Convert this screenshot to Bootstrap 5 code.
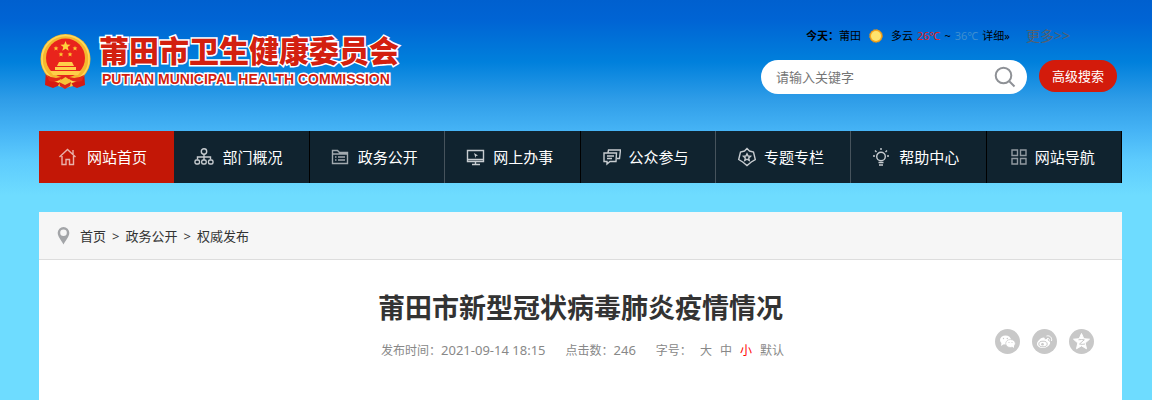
<!DOCTYPE html>
<html lang="zh-CN">
<head>
<meta charset="utf-8">
<meta name="viewport" content="width=device-width, initial-scale=1">
<title>莆田市卫生健康委员会</title>
<link rel="stylesheet" href="https://cdn.jsdelivr.net/npm/bootstrap@5.3.0/dist/css/bootstrap.min.css">
<style>
html { min-height: 100%; background: #6edcff; }
body {
  min-height: 100vh;
  font-family: "Noto Sans", "Noto Sans CJK SC", sans-serif;
  font-size: 13px;
  line-height: 20px;
  color: #333;
  background: #6edcff linear-gradient(#0060cf 0, #0064d4 20px, #0080dc 62px, #2f9de8 100px, #45b3f5 130px, #5dcbfd 160px, #6edcff 195px) no-repeat;
}
a { color: inherit; text-decoration: none; }
.site { padding-left: 39px; padding-right: 30px; }
.masthead { min-height: 131px; }
.brand-link { padding-top: 28px; }
.brand-link svg { margin-top: 4px; }
.brand-zh, .brand-en {
  color: #d3200f;
  -webkit-text-stroke: 3px #fff;
  paint-order: stroke fill;
  white-space: nowrap;
}
.brand-zh { font-family: "Noto Sans CJK SC", sans-serif; font-size: 30px; font-weight: 900; line-height: 43px; }
.brand-en { font-family: "Liberation Sans", sans-serif; font-size: 14px; font-weight: 700; line-height: 16px; padding-left: 3px; }
.tools { padding-top: 26px; padding-right: 5px; }
.weather { font-size: 11px; color: #000; padding-left: 45px; margin-bottom: 14px; }
.low { color: #e02020; }
.high { color: #3f8fd0; }
.more-link { font-size: 14px; color: #56606e; margin-left: 16px; }
.search-form { gap: 12px; }
.search-box { width: 266px; height: 34px; background: #fff; border-radius: 17px; padding: 0 11px 0 15px; }
.search-box input { border: 0; outline: 0; font-size: 13px; background: none; min-width: 0; }
.search-box input::placeholder { color: #757575; }
.advanced { width: 78px; height: 32px; border: 0; border-radius: 16px; background: #d31b0b; color: #fff; font-size: 13px; }
.main-nav { background: #10232f; }
.main-nav a { height: 52px; padding-left: 20px; font-size: 15px; color: #fff; border-right: 1px solid #000; }
.main-nav svg { width: 20px; height: 20px; margin-right: 8px; fill: none; stroke: #c7ccd0; stroke-width: 1.4; }
.main-nav a.active { background: #c31706; border-color: #c31706; }
.main-nav .active svg { stroke: #e9b0aa; }
.main-nav .lined { border-right-color: #46535c; }
.sheet { background: #fff; margin-top: 29px; min-height: 188px; }
.crumbs { height: 48px; background: #f6f6f6; border-bottom: 1px solid #ddd; padding-left: 17px; gap: 6px; }
.crumbs svg { margin-right: 4px; }
.headline { font-size: 27px; line-height: 40px; font-weight: 700; padding-top: 28px; margin: 0; }
.meta { font-size: 12px; color: #888; margin-top: 12px; padding-left: 4px; gap: 20px; }
.meta .figure-text { font-size: 13px; }
.meta button { border: 0; background: none; padding: 0; color: inherit; }
.meta button.current { color: #f00; }
.sizes { gap: 8px; }
.article-head { position: relative; }
.share { position: absolute; right: 28px; top: 69px; gap: 12px; }
.share svg { width: 25px; height: 25px; display: block; }
</style>
</head>
<body>
<div class="site">
  <header class="masthead d-flex justify-content-between align-items-start">
    <a href="#" class="brand-link d-flex align-items-start">
      <svg width="52" height="58" viewBox="0 0 52 58" class="flex-shrink-0" aria-hidden="true">
        <path d="M7 38 6 53l8 3 7-3 5 3 5-3 7 3 8-3-1-15z" fill="#d51a12"/>
        <circle cx="26.500" cy="27" r="25" fill="#f5b82e"/>
        <circle cx="26.500" cy="27" r="23.500" fill="none" stroke="#ffd95a" stroke-width="1.500"/>
        <circle cx="26.500" cy="26" r="19.500" fill="#e9241c"/>
        <path d="m26.500 9 1.400 3.500 3.700.2-2.900 2.400 1 3.600-3.200-2-3.200 2 1-3.600-2.900-2.400 3.700-.2z" fill="#ffd23c"/>
        <path d="m17 14 .7 1.500h1.700l-1.300 1.200.5 1.700-1.600-1-1.600 1 .5-1.700-1.300-1.200h1.700zm19 0 .7 1.500h1.700l-1.300 1.200.5 1.700-1.600-1-1.600 1 .5-1.700-1.300-1.200h1.700zM22 20l.7 1.500h1.700l-1.300 1.200.5 1.700-1.600-1-1.600 1 .5-1.700-1.300-1.200h1.700zm9 0 .7 1.500h1.700l-1.300 1.200.5 1.700-1.600-1-1.600 1 .5-1.700-1.300-1.200h1.700z" fill="#ffc832"/>
        <path d="M20 30h13l2 4H18zm-4 5h21v3H16zm-5 4h31l-3 4H14z" fill="#ffd04a"/>
        <path d="M8 43q9 6 18 0 9 6 19 0l-2 6q-8 2-13-2l-4 6-4-6q-5 4-12 2z" fill="#e02a18"/>
        <path d="m22 48 4.500-3 4.500 3 3 6-7.500 2-7.500-2z" fill="#f7c43a"/>
        <path d="m20 50 6 3 6-3-1 4-5 3-5-3z" fill="#d9281b"/>
      </svg>
      <span class="d-flex flex-column ps-2">
        <span class="brand-zh">莆田市卫生健康委员会</span>
        <span class="brand-en">PUTIAN MUNICIPAL HEALTH COMMISSION</span>
      </span>
    </a>
    <div class="tools">
      <div class="weather d-flex align-items-center">
        <strong>今天：</strong><span>莆田</span>
        <svg class="mx-2" width="14" height="14" viewBox="0 0 14 14" aria-hidden="true"><circle cx="7" cy="7" r="6.500" fill="#f6a51c" stroke="#b98a3c" stroke-dasharray="1.500 1.500"/><circle cx="7" cy="7" r="5" fill="#ffe36d"/></svg>
        <span>多云</span><span class="low ms-1">26℃</span><span class="mx-1">~</span><span class="high">36℃</span>
        <a class="ms-1" href="#">详细»</a><a href="#" class="more-link">更多&gt;&gt;</a>
      </div>
      <form class="search-form d-flex align-items-start">
        <div class="search-box d-flex align-items-center">
          <input class="flex-grow-1 p-0" type="text" placeholder="请输入关键字" aria-label="请输入关键字">
          <button type="button" class="border-0 bg-transparent p-0" aria-label="搜索">
            <svg class="d-block" width="22" height="22" viewBox="0 0 22 22" fill="none" stroke="#8e9196" stroke-width="2"><circle cx="9.500" cy="9.500" r="7.800"/><path d="m15 15 5.500 5.500"/></svg>
          </button>
        </div>
        <button type="button" class="advanced p-0">高级搜索</button>
      </form>
    </div>
  </header>

  <nav class="main-nav row g-0 flex-nowrap">
    <a href="#" class="col active d-flex align-items-center"><svg viewBox="2 0 20 20"><path d="m1.500 10 8-7.500 8 7.500M4 9v8.500h4v-5h3.500v5h4V9M15 3v4" transform="translate(1)"/></svg>网站首页</a>
    <a href="#" class="col d-flex align-items-center"><svg viewBox="0 0 20 20"><circle cx="10" cy="4.500" r="2.700"/><path d="M10 7v6M3.500 12.500V10h13v2.500"/><rect x="1" y="13" width="4.500" height="4" rx="1.500"/><rect x="7.700" y="13" width="4.500" height="4" rx="1.500"/><rect x="14.500" y="13" width="4.500" height="4" rx="1.500"/></svg>部门概况</a>
    <a href="#" class="col lined d-flex align-items-center"><svg viewBox="0 0 20 20" opacity=".8"><path d="M2.500 16.500v-13h5l2 2h8v11zM2.500 7h15M5 10h1.500M5 13h1.500M8 10h7M8 13h7"/></svg>政务公开</a>
    <a href="#" class="col d-flex align-items-center"><svg viewBox="0 0 20 20"><path d="M2.500 3.500h16v11h-16zM2.500 12.500h16M7 17.500h8M10.500 14.500v3"/><path d="m9 6 4 2.500-2 .5-.5 2z" fill="#c7ccd0" stroke="none"/></svg>网上办事</a>
    <a href="#" class="col lined d-flex align-items-center"><svg viewBox="-1 0 20 20"><path d="M2 6h12.500l-.5 8.500H8l-3 2.500v-2.500H2zM6 5.500l.5-2.500h12l-1 8.500H15M5 9h7M5 11.500h5"/></svg>公众参与</a>
    <a href="#" class="col lined d-flex align-items-center"><svg viewBox="-1 0 20 20"><path d="M10 1.500 12.500 4l4 1 1.800 7.500-4 2.500L10 18.500 5.700 15l-4-2.500L3.500 5l4-1z"/><path d="m10 6.800 1.100 2.200 2.400.3-1.800 1.700.5 2.400-2.200-1.200-2.200 1.200.5-2.400-1.800-1.700 2.400-.3z"/></svg>专题专栏</a>
    <a href="#" class="col d-flex align-items-center"><svg viewBox="0 0 20 20"><circle cx="10" cy="9.500" r="4.300"/><path d="M7.500 15.500h5M8 18h4M10 1v2M4 3.500 5.500 5M16 3.500 14.500 5M2 9h2M16 9h2"/></svg>帮助中心</a>
    <a href="#" class="col d-flex align-items-center"><svg viewBox="-1 0 20 20" opacity=".7"><path d="M4 3h5.500v5.500H4zM12.500 3H18v5.500h-5.500zM4 11.500h5.500V17H4zM12.500 11.500H18V17h-5.500z"/></svg>网站导航</a>
  </nav>

  <main class="sheet">
    <nav class="crumbs d-flex align-items-center" aria-label="位置">
      <svg width="14" height="18" viewBox="0 0 14 18" aria-hidden="true"><path fill="#a3a5a8" fill-rule="evenodd" d="M7.500 0a5.800 5.800 0 0 0-5.800 5.800C1.700 9.500 5 13 7.500 17.500 10 13 13.300 9.500 13.300 5.800A5.800 5.800 0 0 0 7.500 0zm0 2.500a3.300 3.300 0 1 1 0 6.600 3.300 3.300 0 0 1 0-6.600z"/></svg>
      <a href="#">首页</a><span>&gt;</span><a href="#">政务公开</a><span>&gt;</span><a href="#">权威发布</a>
    </nav>
    <article class="article-head">
      <h1 class="headline text-center">莆田市新型冠状病毒肺炎疫情情况</h1>
      <div class="meta d-flex justify-content-center align-items-baseline">
        <span>发布时间：<span class="figure-text">2021-09-14 18:15</span></span>
        <span>点击数：<span class="figure-text">246</span></span>
        <span class="sizes d-flex align-items-baseline"><span>字号：</span><button type="button">大</button><button type="button">中</button><button type="button" class="current">小</button><button type="button">默认</button></span>
      </div>
      <div class="share d-flex">
        <a href="#" aria-label="微信"><svg viewBox="0 0 25 25"><circle cx="12.500" cy="12.500" r="12.500" fill="#c8c8c8"/><ellipse cx="10.500" cy="11" rx="5.500" ry="4.500" fill="#fff"/><path d="m6.500 14-.5 3 3-2z" fill="#fff"/><ellipse cx="15.500" cy="14.500" rx="4.800" ry="4" fill="#fff" stroke="#c8c8c8" stroke-width=".7"/><path d="m17 17.500 2 1.500v-3z" fill="#fff"/><g fill="#c8c8c8"><circle cx="8.500" cy="9.500" r=".7"/><circle cx="12.300" cy="9.500" r=".7"/><circle cx="14" cy="13.500" r=".6"/><circle cx="17" cy="13.500" r=".6"/></g></svg></a>
        <a href="#" aria-label="微博"><svg viewBox="0 0 25 25"><circle cx="12.500" cy="12.500" r="12.500" fill="#c8c8c8"/><path d="M5 15c0-3 4-6.500 6.500-6.500 1.500 0 1.500 1 1.200 2 2-1 4-.5 3.300 1.300 2 .5 2.500 1.700 2 3C17 17.500 14 19 11 19s-6-1.500-6-4z" fill="#fff"/><ellipse cx="11" cy="15" rx="4.200" ry="2.800" fill="none" stroke="#c8c8c8"/><circle cx="10.500" cy="15.200" r="1.300" fill="#c8c8c8"/><path d="M14.500 7c3.500-1 6 2 5 5M15 9.500c1.700-.4 2.800.7 2.300 2.200" stroke="#fff" fill="none"/></svg></a>
        <a href="#" aria-label="QQ空间"><svg viewBox="0 0 25 25"><circle cx="12.500" cy="12.500" r="12.500" fill="#c8c8c8"/><path d="m12.500 4.500 2.300 5.200 5.700.5-4.300 3.800 1.300 5.800-5-3-5 3L8.800 14l-4.300-3.800 5.700-.5z" fill="#fff" stroke="#fff" stroke-linejoin="round"/><path d="M9.500 10.800q3-.6 5.800 0L10.500 15q2.500.7 5.500 0" fill="none" stroke="#c8c8c8"/></svg></a>
      </div>
    </article>
  </main>
</div>
<script src="https://cdn.jsdelivr.net/npm/bootstrap@5.3.0/dist/js/bootstrap.bundle.min.js"></script>
</body>
</html>
